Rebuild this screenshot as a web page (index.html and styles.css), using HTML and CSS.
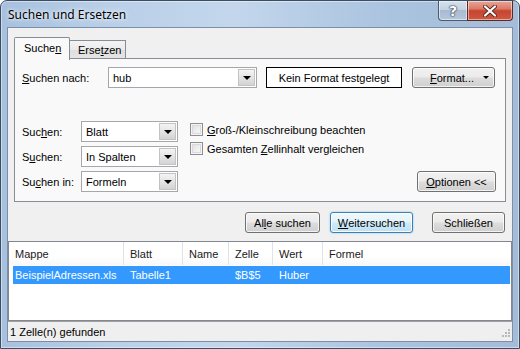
FILE: index.html
```html
<!DOCTYPE html>
<html lang="de">
<head>
<meta charset="utf-8">
<title>Suchen und Ersetzen</title>
<link rel="stylesheet" href="styles.css">
</head>
<body>
<div class="window">
  <div class="titlebar">
    <span class="title">Suchen und Ersetzen</span>
    <div class="caption">
      <div class="cap help"><span class="q">?</span></div>
      <div class="cap close">
        <svg width="14" height="12" viewBox="0 0 14 12">
          <path d="M2 1.5 L12 10.5 M12 1.5 L2 10.5" stroke="#5a2a22" stroke-width="4" stroke-linecap="round"/>
          <path d="M2 1.5 L12 10.5 M12 1.5 L2 10.5" stroke="#ffffff" stroke-width="2.2" stroke-linecap="round"/>
        </svg>
      </div>
    </div>
  </div>
  <div class="client">
    <div class="tabstrip">
      <div class="tab active">Suche<u>n</u></div>
      <div class="tab">Erse<u>t</u>zen</div>
    </div>
    <div class="panel">
      <div class="row1">
        <span class="lbl wide"><u>S</u>uchen nach:</span>
        <div class="combo c-wide"><span class="val">hub</span><span class="dd"><i></i></span></div>
        <div class="fmtbox">Kein Format festgelegt</div>
        <div class="btn fmt"><span><u>F</u>ormat...</span><i class="caret"></i></div>
      </div>
      <div class="lower">
        <div class="opts">
          <div class="optrow"><span class="lbl narrow">Suc<u>h</u>en:</span><div class="combo c-narrow"><span class="val">Blatt</span><span class="dd"><i></i></span></div></div>
          <div class="optrow"><span class="lbl narrow">S<u>u</u>chen:</span><div class="combo c-narrow"><span class="val">In Spalten</span><span class="dd"><i></i></span></div></div>
          <div class="optrow"><span class="lbl narrow">Su<u>c</u>hen in:</span><div class="combo c-narrow"><span class="val">Formeln</span><span class="dd"><i></i></span></div></div>
        </div>
        <div class="checks">
          <div class="chk"><span class="box"></span><span><u>G</u>roß-/Kleinschreibung beachten</span></div>
          <div class="chk"><span class="box"></span><span>Gesamten <u>Z</u>ellinhalt vergleichen</span></div>
        </div>
        <div class="btn opt"><u>O</u>ptionen &lt;&lt;</div>
      </div>
    </div>
    <div class="actions">
      <div class="btn b-alle">Al<u>l</u>e suchen</div>
      <div class="btn default b-weiter"><u>W</u>eitersuchen</div>
      <div class="btn b-close">Schließen</div>
    </div>
    <div class="list">
      <div class="lhead">
        <div class="hc c1">Mappe</div>
        <div class="hc c2">Blatt</div>
        <div class="hc c3">Name</div>
        <div class="hc c4">Zelle</div>
        <div class="hc c5">Wert</div>
        <div class="hc c6">Formel</div>
      </div>
      <div class="lbody">
        <div class="lrow sel">
          <div class="rc r1">BeispielAdressen.xls</div>
          <div class="rc c2">Tabelle1</div>
          <div class="rc c3"></div>
          <div class="rc c4">$B$5</div>
          <div class="rc c5">Huber</div>
          <div class="rc c6"></div>
        </div>
      </div>
    </div>
    <div class="status">
      <span>1 Zelle(n) gefunden</span>
      <svg class="grip" width="12" height="12" viewBox="0 0 12 12">
        <g fill="#b8b8b8">
          <rect x="9" y="1" width="2" height="2"/>
          <rect x="6" y="4" width="2" height="2"/><rect x="9" y="4" width="2" height="2"/>
          <rect x="3" y="7" width="2" height="2"/><rect x="6" y="7" width="2" height="2"/><rect x="9" y="7" width="2" height="2"/>
        </g>
      </svg>
    </div>
  </div>
</div>
</body>
</html>
```
FILE: styles.css
```css
* { box-sizing: border-box; }
html, body { margin: 0; padding: 0; }
body {
  width: 520px;
  height: 349px;
  overflow: hidden;
  background: #ffffff;
  font: 11px "Liberation Sans", Tahoma, Arial, sans-serif;
  color: #000;
}
u { text-decoration: underline; text-underline-offset: 1px; }

.window {
  width: 520px;
  height: 349px;
  display: flex;
  flex-direction: column;
  border: 1px solid #3a4d63;
  border-radius: 7px 7px 0 0;
  background: linear-gradient(90deg, #a6c0de 0%, #b9cfe8 20%, #c3d6ec 45%, #aac3df 75%, #a4bcd8 100%);
  box-shadow: inset 0 0 0 1px rgba(255,255,255,0.45);
}

.titlebar {
  height: 26px;
  display: flex;
  align-items: flex-start;
  padding-left: 7px;
}
.title {
  font: 12px "Noto Sans", "Open Sans", sans-serif;
  line-height: 28px;
  color: #000;
  text-shadow: 0 0 6px rgba(255,255,255,0.9), 0 0 3px rgba(255,255,255,0.9);
}
.caption {
  margin-left: auto;
  margin-right: 6px;
  display: flex;
  height: 20px;
}
.cap {
  height: 20px;
  border: 1px solid #4c5b6e;
  border-top: none;
  display: flex;
  align-items: center;
  justify-content: center;
  box-shadow: inset 0 0 0 1px rgba(255,255,255,0.5);
}
.help {
  width: 29px;
  border-right: none;
  border-radius: 0 0 0 4px;
  background: linear-gradient(180deg, #d6e0ec 0%, #c4d2e2 45%, #a9bbd1 50%, #b6c7db 100%);
}
.help .q {
  font: bold 14px "DejaVu Sans", sans-serif;
  color: #fff;
  text-shadow: 0 0 1px #2c3a4c, 0 0 1px #2c3a4c, 0 0 2px #2c3a4c;
  line-height: 18px;
}
.close {
  width: 46px;
  border-radius: 0 0 4px 0;
  border-color: #5b2a24;
  background: linear-gradient(180deg, #e8a595 0%, #dc7c68 40%, #c64530 52%, #d0583f 100%);
}

.client {
  flex: 1;
  margin: 0 6px 6px 6px;
  border: 1px solid #7b8fa8;
  background: #f0f0f0;
  display: flex;
  flex-direction: column;
  padding: 9px 0 0 0;
}

.tabstrip {
  display: flex;
  align-items: flex-end;
  height: 21px;
  padding-left: 6px;
}
.tab {
  height: 18px;
  padding: 0 8px;
  border: 1px solid #898c95;
  border-bottom: none;
  background: linear-gradient(180deg, #f3f3f3 0%, #ebebeb 50%, #dedede 51%, #e5e5e5 100%);
  display: flex;
  align-items: center;
  width: 56px;
}
.tab.active {
  position: relative;
  z-index: 2;
  height: 23px;
  margin-bottom: -2px;
  width: 56px;
  background: #f9f9f9;
  padding-left: 9px;
  padding-bottom: 2px;
  border-radius: 2px 2px 0 0;
}
.tab + .tab { border-left: none; }

.panel {
  margin: 0 6px 0 6px;
  border: 1px solid #898c95;
  background: #f9f9f9;
  padding: 8px 9px 9px 7px;
}

.row1 {
  display: flex;
  align-items: center;
  height: 21px;
}
.lbl.wide { width: 86px; }
.lbl.narrow { width: 59px; }

.combo {
  height: 21px;
  border: 1px solid #a5a7ad;
  background: #fff;
  display: flex;
  align-items: center;
  padding: 1px;
}
.combo .val { flex: 1; padding-left: 3px; }
.combo .dd {
  width: 17px;
  height: 17px;
  border: 1px solid #c3c3c3;
  background: linear-gradient(180deg, #f4f4f4 0%, #e4e4e4 50%, #d3d3d3 100%);
  display: flex;
  align-items: center;
  justify-content: center;
}
.combo .dd i {
  width: 0;
  height: 0;
  border-left: 4px solid transparent;
  border-right: 4px solid transparent;
  border-top: 4px solid #000;
  margin-top: 1px;
}
.c-wide { width: 149px; }
.c-narrow { width: 97px; }

.fmtbox {
  margin-left: 9px;
  width: 136px;
  height: 21px;
  border: 1px solid #000;
  background: #fff;
  display: flex;
  align-items: center;
  justify-content: center;
}

.btn {
  height: 21px;
  border: 1px solid #707070;
  border-radius: 3px;
  background: linear-gradient(180deg, #f2f2f2 0%, #ebebeb 48%, #dddddd 52%, #cfcfcf 100%);
  box-shadow: inset 0 0 0 1px rgba(255,255,255,0.75);
  display: flex;
  align-items: center;
  justify-content: center;
}
.btn.default {
  border-color: #3c7fb1;
  background: linear-gradient(180deg, #f1f9fd 0%, #e3f3fb 48%, #cfeaf8 52%, #bee1f3 100%);
  box-shadow: inset 0 0 0 1px rgba(255,255,255,0.85), 0 0 2px rgba(60,160,220,0.6);
}
.btn.fmt {
  margin-left: 10px;
  width: 83px;
  justify-content: flex-start;
  padding-left: 17px;
}
.btn.fmt .caret {
  margin-left: auto;
  margin-right: 5px;
  width: 0;
  height: 0;
  border-left: 3px solid transparent;
  border-right: 3px solid transparent;
  border-top: 3px solid #000;
}

.lower {
  margin-top: 33px;
  display: flex;
  align-items: flex-end;
}
.opts {
  display: flex;
  flex-direction: column;
  gap: 4px;
}
.optrow {
  display: flex;
  align-items: center;
  height: 21px;
}
.checks {
  align-self: flex-start;
  margin-left: 12px;
  display: flex;
  flex-direction: column;
  gap: 2px;
}
.chk {
  height: 17px;
  display: flex;
  align-items: center;
}
.chk .box {
  width: 13px;
  height: 13px;
  border: 1px solid #8e8f8f;
  background: linear-gradient(135deg, #dcdcdc 0%, #f0f0f0 60%, #fbfbfb 100%);
  box-shadow: inset 0 0 0 1px #f4f4f4, inset 0 0 0 2px #d8dadc;
  margin-right: 4px;
}
.btn.opt {
  margin-left: auto;
  width: 79px;
}

.actions {
  margin-top: 10px;
  display: flex;
  justify-content: flex-end;
  padding-right: 7px;
}
.b-alle { width: 75px; margin-right: 10px; }
.b-weiter { width: 83px; margin-right: 19px; }
.b-close { width: 73px; }

.list {
  margin-top: 8px;
  flex: 1;
  border: 1px solid #828790;
  background: #fff;
  display: flex;
  flex-direction: column;
}
.lhead {
  height: 23px;
  display: flex;
  background: linear-gradient(180deg, #ffffff 0%, #ffffff 60%, #f7f8fa 100%);
}
.hc {
  height: 23px;
  display: flex;
  align-items: center;
  padding-left: 6px;
  border-right: 1px solid #dfe2e6;
  color: #1a1a1a;
}
.c1 { width: 115px; }
.c2 { width: 59px; }
.c3 { width: 46px; }
.c4 { width: 44px; }
.c5 { width: 50px; }
.c6 { flex: 1; border-right: none; }

.lbody { flex: 1; padding-top: 1px; }
.lrow {
  height: 18px;
  display: flex;
  margin: 0 1px 0 4px;
}
.lrow.sel { background: #3399ff; color: #fff; }
.rc {
  display: flex;
  align-items: center;
  padding-left: 6px;
}
.rc.r1 { width: 111px; padding-left: 2px; }
.rc.c6 { flex: 1; }

.status {
  height: 20px;
  border-top: 1px solid #a0a0a0;
  background: #f0efef;
  display: flex;
  align-items: center;
  padding-left: 2px;
}
.grip { margin-left: auto; align-self: flex-end; margin-right: 1px; margin-bottom: 1px; }
```
